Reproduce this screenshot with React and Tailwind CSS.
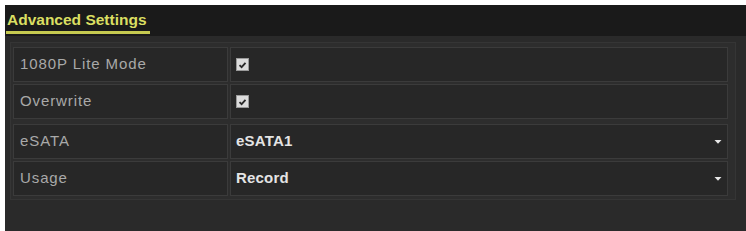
import React from "react";

function Check() {
  return (
    <div className="w-[13px] h-[13px] bg-[#dcdcdc] border border-[#9a9a9a] flex items-center justify-center">
      <svg width="9" height="8" viewBox="0 0 9 8">
        <path d="M1.5 4.2 L3.6 6.2 L7.5 1.8" stroke="#2a2a2a" strokeWidth="1.8" fill="none" />
      </svg>
    </div>
  );
}

function Chevron() {
  return (
    <svg width="8" height="6" viewBox="0 0 8 6">
      <path d="M0.5 1 L4 4.8 L7.5 1 Z" fill="#e8e8e8" />
    </svg>
  );
}

function Row({ label, children, arrow }) {
  return (
    <div className="flex h-[35px]">
      <div className="w-[215px] bg-[#272727] border border-[#3b3b3b] flex items-center pl-[6px] text-[15px] tracking-[0.9px] text-[#a9a9a9]">
        {label}
      </div>
      <div className="flex-1 ml-[2px] bg-[#272727] border border-[#3b3b3b] flex items-center pl-[5px] pr-[5px]">
        <div className="flex-1 flex items-center text-[15px] font-bold tracking-[0.2px] text-[#e4e4e4]">{children}</div>
        {arrow && <Chevron />}
      </div>
    </div>
  );
}

export default function App() {
  return (
    <div className="w-[746px] h-[231px] bg-white pt-[5px] pl-[5px] overflow-hidden font-['Liberation_Sans',Arial,sans-serif]">
      <div className="h-full bg-[#2a2a2a] flex flex-col">
        <div className="h-[31px] shrink-0 bg-[#1a1a1a] flex items-end pl-[1px]">
          <div className="mb-[2px] pl-[1px] pr-[3px] pb-[4px] border-b-[3px] border-[#c6ca50] text-[15.5px] font-bold leading-none text-[#dadf62]">
            Advanced Settings
          </div>
        </div>
        <div className="mt-[6px] ml-[5px] w-[726px] bg-[#2d2d2d] border border-[#353535] pt-[4px] pb-[3px] pl-[2px] pr-[7px] flex flex-col">
          <div className="flex flex-col gap-[2px]">
            <Row label="1080P Lite Mode"><Check /></Row>
            <Row label="Overwrite"><Check /></Row>
          </div>
          <div className="flex flex-col gap-[2px] mt-[5px]">
            <Row label="eSATA" arrow>eSATA1</Row>
            <Row label="Usage" arrow>Record</Row>
          </div>
        </div>
      </div>
    </div>
  );
}
